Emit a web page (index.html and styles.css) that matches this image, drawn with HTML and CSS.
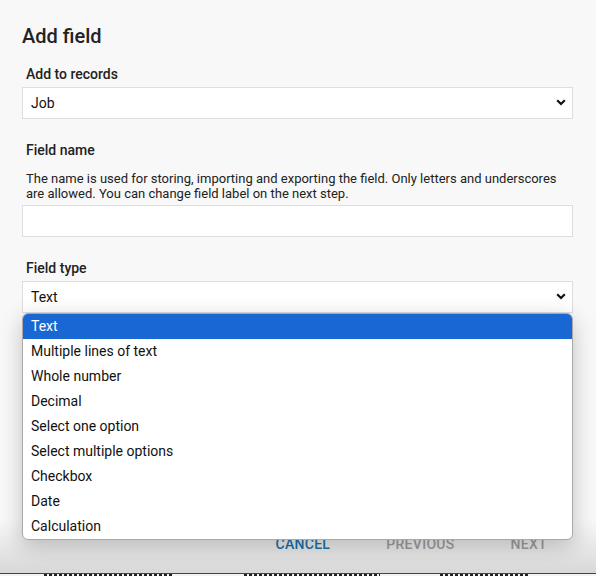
FILE: index.html
```html
<!DOCTYPE html>
<html>
<head>
<meta charset="utf-8">
<link rel="stylesheet" href="styles.css">
</head>
<body>
<div class="dialog">
  <h1 class="title">Add field</h1>

  <div class="group group-first">
    <div class="label">Add to records</div>
    <div class="control">
      <span>Job</span>
      <svg class="chev" width="10" height="7" viewBox="0 0 10 7"><polyline points="1.2,1.2 5,5 8.8,1.2" fill="none" stroke="#111" stroke-width="2.2"/></svg>
    </div>
  </div>

  <div class="group">
    <div class="label">Field name</div>
    <div class="desc">The name is used for storing, importing and exporting the field. Only letters and underscores are allowed. You can change field label on the next step.</div>
    <div class="control input"></div>
  </div>

  <div class="group">
    <div class="label">Field type</div>
    <div class="select-wrap">
      <div class="control">
        <span>Text</span>
        <svg class="chev" width="10" height="7" viewBox="0 0 10 7"><polyline points="1.2,1.2 5,5 8.8,1.2" fill="none" stroke="#111" stroke-width="2.2"/></svg>
      </div>
      <ul class="menu">
        <li class="opt selected">Text</li>
        <li class="opt">Multiple lines of text</li>
        <li class="opt">Whole number</li>
        <li class="opt">Decimal</li>
        <li class="opt">Select one option</li>
        <li class="opt">Select multiple options</li>
        <li class="opt">Checkbox</li>
        <li class="opt">Date</li>
        <li class="opt">Calculation</li>
      </ul>
    </div>
  </div>

  <div class="actions">
    <span class="btn primary">Cancel</span>
    <span class="btn disabled">Previous</span>
    <span class="btn disabled">Next</span>
  </div>
</div>
<div class="behind">
  <span class="frag f1"></span>
  <span class="frag f2"></span>
  <span class="frag f3"></span>
</div>
</body>
</html>
```

FILE: styles.css
```css
html, body {
  margin: 0;
  padding: 0;
}
body {
  width: 596px;
  height: 576px;
  overflow: hidden;
  font-family: Roboto, "Liberation Sans", sans-serif;
  color: #212121;
  background: #f0f0f0;
}
.dialog {
  height: 573px;
  box-sizing: border-box;
  padding: 24px 23px 0 22px;
  background: linear-gradient(to bottom, #f8f8f8 0, #f8f8f8 520px, #d8d8d8 573px);
  position: relative;
}
.title {
  margin: 0;
  font-size: 20px;
  line-height: 24px;
  font-weight: 500;
  color: #222;
}
.group {
  margin-top: 21px;
}
.group-first {
  margin-top: 16px;
}
.label {
  padding-left: 4px;
  font-size: 14px;
  line-height: 20px;
  font-weight: 500;
  color: #222;
  margin-bottom: 3px;
}
.desc {
  padding-left: 4px;
  font-size: 13px;
  line-height: 15px;
  color: #222;
  margin-top: 11px;
  margin-bottom: 4px;
}
.control {
  height: 32px;
  box-sizing: border-box;
  border: 1px solid #dedede;
  background: #fff;
  display: flex;
  align-items: center;
  justify-content: space-between;
  padding: 0 6px 1px 8px;
  font-size: 14px;
  color: #111;
}
.chev {
  display: block;
}
.select-wrap {
  position: relative;
}
.menu {
  position: absolute;
  left: 0;
  right: 0;
  top: 32px;
  margin: 0;
  padding: 0;
  list-style: none;
  background: #fff;
  border: 1px solid #a9a9a9;
  border-radius: 6px;
  overflow: hidden;
  box-shadow: 0 6px 22px rgba(0,0,0,0.22);
  z-index: 2;
}
.opt {
  height: 25px;
  line-height: 25px;
  padding-left: 8px;
  font-size: 14px;
  color: #111;
}
.opt.selected {
  background: #1967d2;
  color: #fff;
}
.actions {
  display: flex;
  justify-content: flex-end;
  margin-top: 221px;
  padding-right: 26px;
}
.btn {
  padding: 0 28px;
  font-size: 14px;
  line-height: 20px;
  font-weight: 500;
  text-transform: uppercase;
  letter-spacing: 0.3px;
}
.btn:last-child {
  padding-right: 0;
}
.btn.primary {
  color: #1b6fa8;
}
.btn.disabled {
  color: #9a9a9a;
}
.behind {
  height: 3px;
  border-top: 1px solid #444;
  box-sizing: border-box;
  background: #f4f4f4;
  display: flex;
  align-items: flex-start;
}
.frag {
  height: 2px;
  background: repeating-linear-gradient(to right, #222 0 3px, transparent 3px 5px);
}
.f1 { margin-left: 44px; width: 128px; }
.f2 { margin-left: 72px; width: 136px; }
.f3 { margin-left: 60px; width: 90px; }
```
